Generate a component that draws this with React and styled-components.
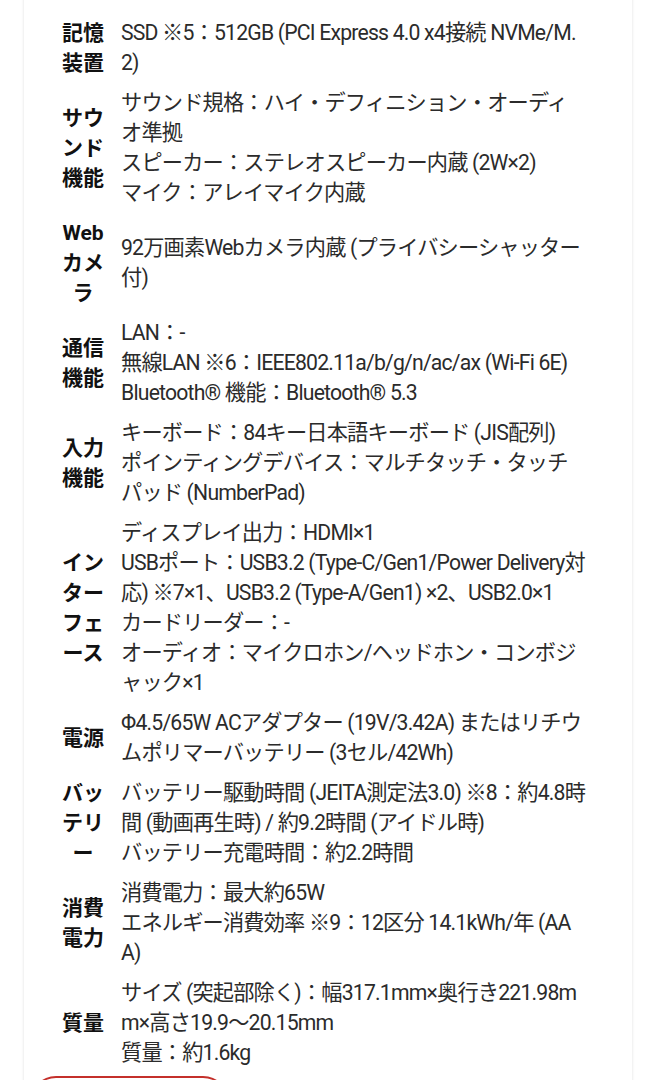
import styled, { createGlobalStyle } from 'styled-components';

const GlobalStyle = createGlobalStyle`
	html, body {
		margin: 0;
		padding: 0;
		background: #ffffff;
	}
	body {
		font-family: Roboto, 'Noto Sans CJK JP', sans-serif;
		overflow: hidden;
	}
`;

const specs = [
	{ label: '記憶装置', lines: ['SSD ※5：512GB (PCI Express 4.0 x4接続 NVMe/M.2)'] },
	{
		label: 'サウンド機能',
		lines: [
			'サウンド規格：ハイ・デフィニション・オーディオ準拠',
			'スピーカー：ステレオスピーカー内蔵 (2W×2)',
			'マイク：アレイマイク内蔵',
		],
	},
	{ label: 'Webカメラ', lines: ['92万画素Webカメラ内蔵 (プライバシーシャッター付)'] },
	{
		label: '通信機能',
		lines: ['LAN：-', '無線LAN ※6：IEEE802.11a/b/g/n/ac/ax (Wi-Fi 6E)', 'Bluetooth® 機能：Bluetooth® 5.3'],
	},
	{
		label: '入力機能',
		lines: ['キーボード：84キー日本語キーボード (JIS配列)', 'ポインティングデバイス：マルチタッチ・タッチパッド (NumberPad)'],
	},
	{
		label: 'インターフェース',
		lines: [
			'ディスプレイ出力：HDMI×1',
			'USBポート：USB3.2 (Type-C/Gen1/Power Delivery対応) ※7×1、USB3.2 (Type-A/Gen1) ×2、USB2.0×1',
			'カードリーダー：-',
			'オーディオ：マイクロホン/ヘッドホン・コンボジャック×1',
		],
	},
	{ label: '電源', lines: ['Φ4.5/65W ACアダプター (19V/3.42A) またはリチウムポリマーバッテリー (3セル/42Wh)'] },
	{
		label: 'バッテリー',
		lines: [
			'バッテリー駆動時間 (JEITA測定法3.0) ※8：約4.8時間 (動画再生時) / 約9.2時間 (アイドル時)',
			'バッテリー充電時間：約2.2時間',
		],
	},
	{ label: '消費電力', lines: ['消費電力：最大約65W', 'エネルギー消費効率 ※9：12区分 14.1kWh/年 (AAA)'] },
	{
		label: '質量',
		lines: ['サイズ (突起部除く)：幅317.1mm×奥行き221.98mm×高さ19.9〜20.15mm', '質量：約1.6kg'],
	},
];

export default function App() {
	return (
		<>
			<GlobalStyle />
			<Card lang='ja'>
				<SpecList>
					{specs.map(({ label, lines }) => (
						<Row key={label}>
							<Label>{label}</Label>
							<Value>
								{lines.map((line) => (
									<Line key={line}>{line}</Line>
								))}
							</Value>
						</Row>
					))}
				</SpecList>
				<MoreButton type='button' aria-label='もっと見る' />
			</Card>
		</>
	);
}

const Card = styled.section`
	margin: -12px 24px 0;
	background: #ffffff;
	border-radius: 4px;
	box-shadow: 0 0 3px rgba(0, 0, 0, 0.14);
	padding: 30px 0 40px 36px;
`;

const SpecList = styled.div`
	display: flex;
	flex-direction: column;
	gap: 10px;
`;

const Row = styled.div`
	display: grid;
	grid-template-columns: 46px 465px;
	column-gap: 15px;
	align-items: center;
`;

const Label = styled.div`
	font-size: 21px;
	line-height: 30px;
	font-weight: 700;
	color: #111111;
	text-align: center;
	word-break: break-all;
	line-break: loose;
`;

const Value = styled.div`
	font-size: 21.2px;
	letter-spacing: -0.8px;
	line-height: 30px;
	color: #2b2b2b;
	word-break: break-all;
	line-break: loose;
`;

const Line = styled.div``;

const MoreButton = styled.button`
	display: block;
	margin: 8px 0 0 -30px;
	width: 199px;
	height: 52px;
	border: 2px solid #c4302b;
	border-radius: 26px;
	background: #ffffff;
`;
